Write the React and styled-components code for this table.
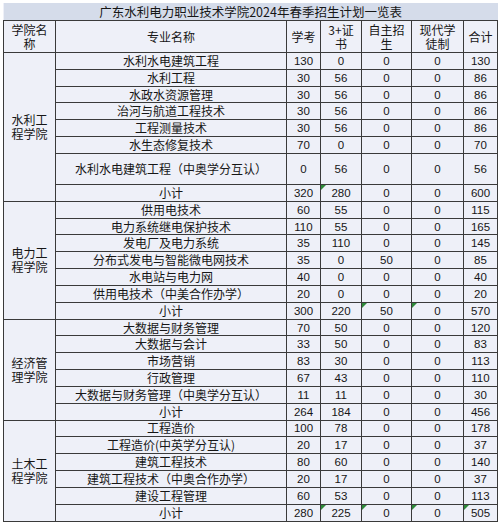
import React from "react";
import styled, { createGlobalStyle } from "styled-components";

const GlobalStyle = createGlobalStyle`
  html, body {
    margin: 0;
    padding: 0;
    background: #ffffff;
    overflow: hidden;
  }
  body {
    font-family: "Noto Sans CJK SC", "Noto Sans", sans-serif;
    color: #161616;
  }
`;

const Page = styled.div`
  padding: 3px 3px 0 3px;
  width: 494px;
`;

const Sheet = styled.table`
  width: 494px;
  table-layout: fixed;
  border-collapse: collapse;
  background: #eef0f8;
`;

const TitleCell = styled.td`
  height: 17px;
  padding: 0;
  background: #d5dcea;
  border-bottom: 1px solid #3a3a3a;
  text-align: center;
  font-size: 12.5px;
  line-height: 17px;
  white-space: nowrap;
  overflow: hidden;
`;

const HeadCell = styled.th`
  height: 31px;
  padding: 0 ${(p) => p.$pad || 4}px;
  border: 1px solid #3a3a3a;
  font-weight: normal;
  font-size: 12px;
  line-height: 14px;
  text-align: center;
  vertical-align: middle;
`;

const Row = styled.tr`
  height: ${(p) => (p.$tall ? 31 : 16.83)}px;
`;

const CollegeCell = styled.td`
  padding: 0 6px;
  border: 1px solid #3a3a3a;
  font-size: 12px;
  line-height: 14px;
  text-align: center;
  vertical-align: middle;
`;

const MajorCell = styled.td`
  padding: 0;
  border: 1px solid #3a3a3a;
  font-size: 12px;
  line-height: 14px;
  text-align: center;
  vertical-align: middle;
  white-space: nowrap;
  overflow: hidden;
`;

const NumCell = styled.td`
  position: relative;
  padding: 0;
  border: 1px solid #3a3a3a;
  font-family: "Liberation Sans", Arial, sans-serif;
  font-size: 11.5px;
  line-height: 14px;
  text-align: center;
  vertical-align: middle;
`;

const Marker = styled.span`
  position: absolute;
  left: 0;
  top: 0;
  width: 0;
  height: 0;
  border-top: 5px solid #2f8a3a;
  border-right: 5px solid transparent;
`;

const colleges = [
  {
    name: "水利工程学院",
    rows: [
      ["水利水电建筑工程", 130, 0, 0, 0, 130],
      ["水利工程", 30, 56, 0, 0, 86],
      ["水政水资源管理", 30, 56, 0, 0, 86],
      ["治河与航道工程技术", 30, 56, 0, 0, 86],
      ["工程测量技术", 30, 56, 0, 0, 86],
      ["水生态修复技术", 70, 0, 0, 0, 70],
      ["水利水电建筑工程（中奥学分互认）", 0, 56, 0, 0, 56, true],
    ],
    total: [320, 280, 0, 0, 600],
    marks: [1],
  },
  {
    name: "电力工程学院",
    rows: [
      ["供用电技术", 60, 55, 0, 0, 115],
      ["电力系统继电保护技术", 110, 55, 0, 0, 165],
      ["发电厂及电力系统", 35, 110, 0, 0, 145],
      ["分布式发电与智能微电网技术", 35, 0, 50, 0, 85],
      ["水电站与电力网", 40, 0, 0, 0, 40],
      ["供用电技术（中美合作办学）", 20, 0, 0, 0, 20],
    ],
    total: [300, 220, 50, 0, 570],
    marks: [2, 3],
  },
  {
    name: "经济管理学院",
    rows: [
      ["大数据与财务管理", 70, 50, 0, 0, 120],
      ["大数据与会计", 33, 50, 0, 0, 83],
      ["市场营销", 83, 30, 0, 0, 113],
      ["行政管理", 67, 43, 0, 0, 110],
      ["大数据与财务管理（中奥学分互认）", 11, 11, 0, 0, 30],
    ],
    total: [264, 184, 0, 0, 456],
    marks: [],
  },
  {
    name: "土木工程学院",
    rows: [
      ["工程造价", 100, 78, 0, 0, 178],
      ["工程造价(中英学分互认)", 20, 17, 0, 0, 37],
      ["建筑工程技术", 80, 60, 0, 0, 140],
      ["建筑工程技术（中奥合作办学）", 20, 17, 0, 0, 37],
      ["建设工程管理", 60, 53, 0, 0, 113],
    ],
    total: [280, 225, 0, 0, 505],
    marks: [1, 2, 3, 4],
  },
];

const widths = [52, 231, 34, 41, 50, 52, 34];

export default function App() {
  return (
    <Page>
      <GlobalStyle />
      <Sheet>
        <colgroup>
          {widths.map((w, i) => (
            <col key={i} style={{ width: w }} />
          ))}
        </colgroup>
        <thead>
          <tr>
            <TitleCell colSpan={7}>
              广东水利电力职业技术学院2024年春季招生计划一览表
            </TitleCell>
          </tr>
          <tr>
            <HeadCell $pad={6}>学院名称</HeadCell>
            <HeadCell>专业名称</HeadCell>
            <HeadCell $pad={2}>学考</HeadCell>
            <HeadCell $pad={5}>3+证书</HeadCell>
            <HeadCell>自主招生</HeadCell>
            <HeadCell>现代学徒制</HeadCell>
            <HeadCell $pad={2}>合计</HeadCell>
          </tr>
        </thead>
        <tbody>
          {colleges.map((c) => (
            <React.Fragment key={c.name}>
              {c.rows.map((r, i) => (
                <Row key={r[0]} $tall={r[6]}>
                  {i === 0 && (
                    <CollegeCell rowSpan={c.rows.length + 1}>{c.name}</CollegeCell>
                  )}
                  <MajorCell>{r[0]}</MajorCell>
                  {r.slice(1, 6).map((n, j) => (
                    <NumCell key={j}>{n}</NumCell>
                  ))}
                </Row>
              ))}
              <Row>
                <MajorCell>小计</MajorCell>
                {c.total.map((n, j) => (
                  <NumCell key={j}>
                    {c.marks.includes(j) && <Marker />}
                    {n}
                  </NumCell>
                ))}
              </Row>
            </React.Fragment>
          ))}
        </tbody>
      </Sheet>
    </Page>
  );
}
